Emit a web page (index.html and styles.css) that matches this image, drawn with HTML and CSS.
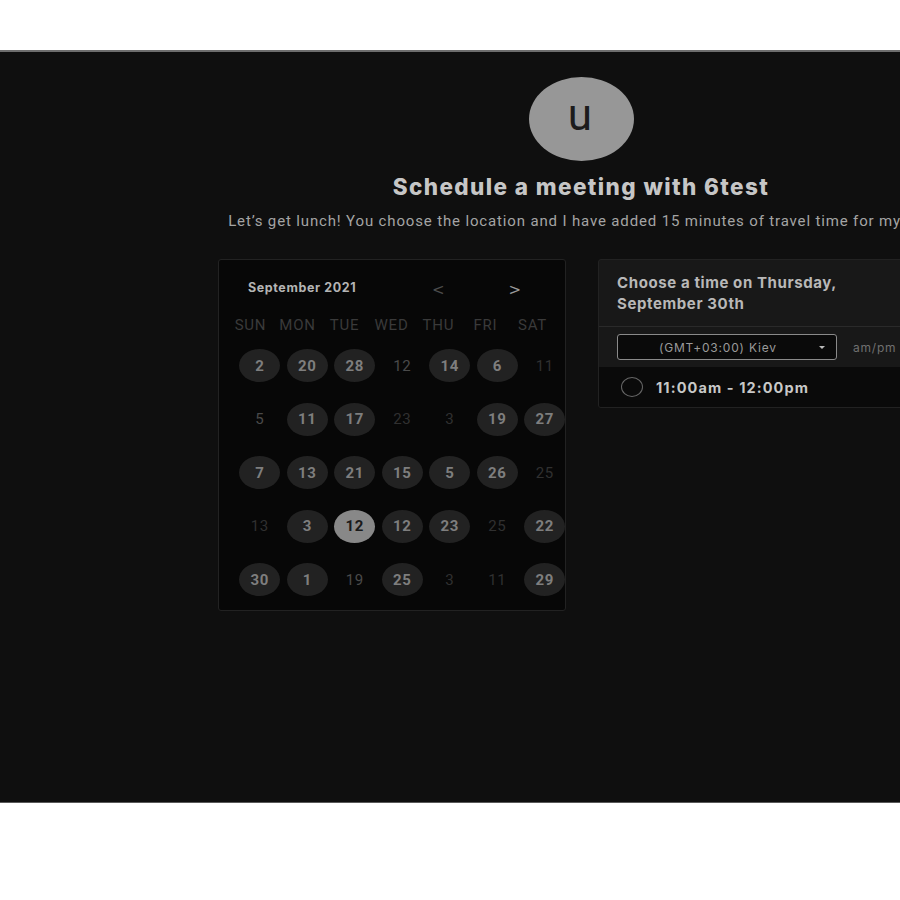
FILE: index.html
```html
<!DOCTYPE html>
<html>
<head>
<meta charset="utf-8">
<link rel="stylesheet" href="styles.css">
</head>
<body>
<div class="stage">
  <div class="inner">
    <div class="avatar">u</div>
    <h1 class="title">Schedule a meeting with 6test</h1>
    <p class="subtitle">Let’s get lunch! You choose the location and I have added 15 minutes of travel time for myself.</p>
    <div class="panels">
      <div class="cal">
        <div class="cal-head">
          <span class="month">September 2021</span>
          <span class="arrow prev">&lt;</span>
          <span class="arrow next">&gt;</span>
        </div>
        <div class="weekdays">
          <span>SUN</span><span>MON</span><span>TUE</span><span>WED</span><span>THU</span><span>FRI</span><span>SAT</span>
        </div>
        <div class="days">
          <span class="d av">2</span><span class="d av">20</span><span class="d av">28</span><span class="d pl">12</span><span class="d av">14</span><span class="d av">6</span><span class="d fa">11</span>
          <span class="d pl">5</span><span class="d av">11</span><span class="d av">17</span><span class="d fa">23</span><span class="d fa">3</span><span class="d av">19</span><span class="d av">27</span>
          <span class="d av">7</span><span class="d av">13</span><span class="d av">21</span><span class="d av">15</span><span class="d av">5</span><span class="d av">26</span><span class="d fa">25</span>
          <span class="d fa">13</span><span class="d av">3</span><span class="d sel">12</span><span class="d av">12</span><span class="d av">23</span><span class="d fa">25</span><span class="d av">22</span>
          <span class="d av">30</span><span class="d av">1</span><span class="d pl">19</span><span class="d av">25</span><span class="d fa">3</span><span class="d fa">11</span><span class="d av">29</span>
        </div>
      </div>
      <div class="times">
        <div class="times-head">Choose a time on Thursday,<br>September 30th</div>
        <div class="tz-row">
          <div class="tz-select"><span>(GMT+03:00) Kiev</span><span class="caret"></span></div>
          <span class="ampm">am/pm</span>
        </div>
        <div class="slot">
          <span class="radio"></span>
          <span class="slot-text">11:00am - 12:00pm</span>
        </div>
      </div>
    </div>
  </div>
</div>
</body>
</html>
```
FILE: styles.css
```css
html, body {
  margin: 0;
  padding: 0;
  background: #ffffff;
  overflow: hidden;
}
body {
  font-family: Roboto, "Liberation Sans", sans-serif;
  width: 900px;
  height: 900px;
}
.stage {
  margin-top: 50px;
  height: 750px;
  background: #0f0f0f;
  border-top: 2px solid #6e6e6e;
  border-bottom: 1px solid #5a5a5a;
  overflow: hidden;
}
.inner {
  width: 1162px;
  display: flex;
  flex-direction: column;
  align-items: center;
  padding-top: 25px;
}
.avatar {
  width: 105px;
  height: 84px;
  border-radius: 50%;
  background: #979797;
  color: #1c1c1c;
  font-family: Roboto, sans-serif;
  font-size: 44px;
  line-height: 76px;
  text-align: center;
  letter-spacing: 2px;
}
.title {
  margin: 14px 0 0;
  font-family: Inter, sans-serif;
  font-weight: 800;
  font-size: 22.5px;
  line-height: 24px;
  color: #c6c6c6;
  letter-spacing: 1.4px;
}
.subtitle {
  margin: 13px 0 0;
  font-size: 15px;
  line-height: 18px;
  color: #a4a4a4;
  white-space: nowrap;
  letter-spacing: 0.85px;
}
.panels {
  display: flex;
  gap: 32px;
  margin-top: 29px;
}
.cal {
  width: 329px;
  height: 332px;
  padding: 18px 0 0 17px;
  background: #070707;
  border: 1px solid #222;
  border-radius: 3px;
}
.cal-head {
  height: 18px;
  display: flex;
  align-items: center;
  padding-left: 12px;
}
.month {
  font-family: Inter, sans-serif;
  font-weight: 700;
  font-size: 12.5px;
  letter-spacing: 0.6px;
  color: #b4b4b4;
  width: 180px;
}
.arrow {
  font-family: "DejaVu Sans", sans-serif;
  font-size: 15px;
  margin-top: 6px;
}
.prev { color: #4c4c4c; margin-left: 4px; }
.next { color: #9a9a9a; margin-left: 64px; }
.weekdays {
  display: grid;
  grid-template-columns: repeat(7, 47px);
  margin: 21px 0 0 -9px;
  height: 16px;
  line-height: 16px;
  font-size: 15px;
  letter-spacing: 0.8px;
  color: #3a3a3a;
  text-align: center;
}
.days {
  display: grid;
  grid-template-columns: repeat(7, 47.5px);
  grid-auto-rows: 53.5px;
  margin-top: 6px;
}
.d {
  justify-self: center;
  align-self: center;
  width: 41px;
  height: 33px;
  border-radius: 50%;
  display: flex;
  align-items: center;
  justify-content: center;
  font-size: 15px;
  letter-spacing: 0.6px;
}
.av {
  background: #222222;
  color: #7e7e7e;
  font-weight: 700;
}
.sel {
  background: #888888;
  color: #1a1a1a;
  font-weight: 700;
}
.pl {
  color: #4a4a4a;
}
.fa {
  color: #303030;
}
.times {
  width: 344px;
  height: 147px;
  background: #181818;
  border: 1px solid #222;
  border-radius: 3px;
  display: flex;
  flex-direction: column;
  overflow: hidden;
}
.times-head {
  padding: 12px 18px 12px;
  font-family: Inter, sans-serif;
  font-weight: 700;
  font-size: 15px;
  letter-spacing: 0.6px;
  line-height: 21px;
  color: #b8b8b8;
  border-bottom: 1px solid #2a2a2a;
}
.tz-row {
  display: flex;
  align-items: center;
  padding: 7px 18px;
  gap: 16px;
}
.tz-select {
  width: 218px;
  height: 24px;
  border: 1px solid #8a8a8a;
  border-radius: 3px;
  background: #0a0a0a;
  display: flex;
  align-items: center;
  font-family: Inter, sans-serif;
  font-size: 12px;
  letter-spacing: 0.8px;
  color: #9a9a9a;
  position: relative;
}
.tz-select span:first-child {
  margin-left: 41px;
}
.caret {
  position: absolute;
  right: 11px;
  top: 11px;
  width: 0;
  height: 0;
  border-left: 3px solid transparent;
  border-right: 3px solid transparent;
  border-top: 3px solid #bbb;
}
.ampm {
  font-family: Inter, sans-serif;
  font-size: 12px;
  letter-spacing: 0.8px;
  color: #707070;
}
.slot {
  flex: 1;
  background: #0a0a0a;
  display: flex;
  align-items: center;
  padding-left: 22px;
  gap: 13px;
}
.radio {
  width: 20px;
  height: 18px;
  border: 1.5px solid #666;
  border-radius: 50%;
}
.slot-text {
  font-family: Inter, sans-serif;
  font-weight: 700;
  font-size: 14.5px;
  letter-spacing: 1.1px;
  color: #c8c8c8;
}
```
